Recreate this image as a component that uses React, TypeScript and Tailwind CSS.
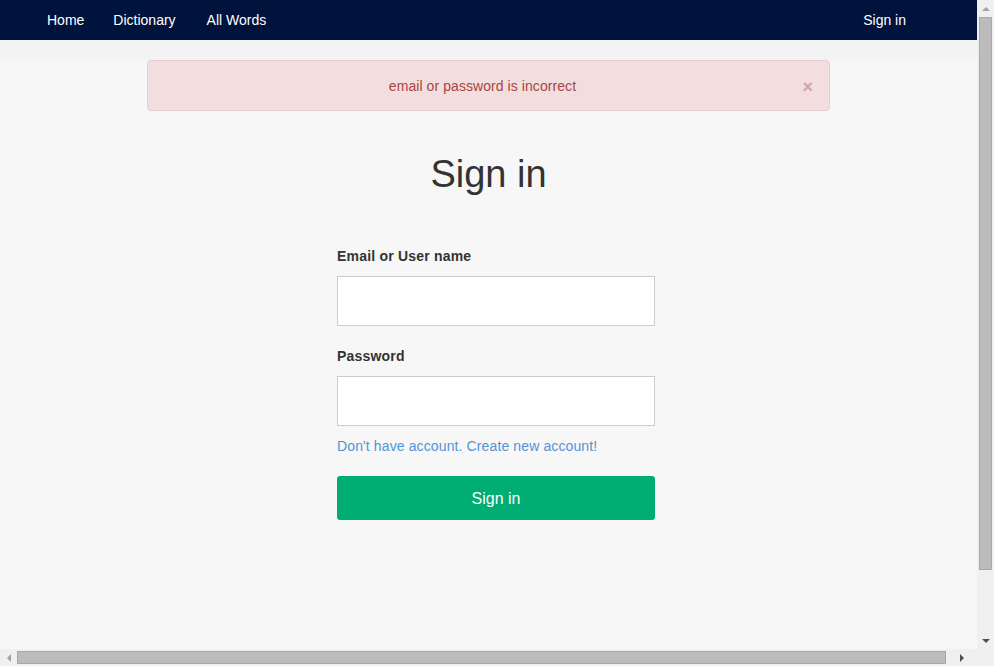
const font = { fontFamily: '"Liberation Sans", Arial, sans-serif' };

function NavBar() {
  return (
    <nav className="h-10 bg-[#00133d] flex items-center text-white text-[14px] px-[47px]">
      <a className="mr-[29px]">Home</a>
      <a className="mr-[31px]">Dictionary</a>
      <a>All Words</a>
      <a className="ml-auto mr-[24px]">Sign in</a>
    </nav>
  );
}

function Alert() {
  return (
    <div className="mx-auto w-[683px] h-[51px] pr-[12px] rounded-[4px] border border-[#ebccd1] bg-[#f2dede] text-[#a94442] text-[14px] tracking-[0.07px] flex items-center justify-center relative">
      <span className="mt-[2px]">email or password is incorrect</span>
      <span className="absolute right-[16px] top-[17px] text-[#c9a8a8] font-bold text-[18px] leading-none">×</span>
    </div>
  );
}

function SignInForm() {
  return (
    <div className="flex flex-col items-center">
      <h1 className="text-[38px] text-[#333] mt-[42px] leading-[42px]">Sign in</h1>
      <form className="w-[318px] mt-[51px] ml-[15px] flex flex-col">
        <label className="text-[14px] font-bold text-[#333] leading-5 tracking-[0.2px]">Email or User name</label>
        <input className="mt-[10px] h-[50px] bg-white border border-[#ccc] outline-none px-3" />
        <label className="text-[14px] font-bold text-[#333] leading-5 mt-[20px] tracking-[0.2px]">Password</label>
        <input type="password" className="mt-[10px] h-[50px] bg-white border border-[#ccc] outline-none px-3" />
        <a className="text-[14px] text-[#5294d6] mt-[10px] leading-5 tracking-[0.12px]">Don't have account. Create new account!</a>
        <button type="button" className="mt-[20px] h-[44px] rounded-[3px] bg-[#00ad73] text-white text-[16px]">
          <span className="relative top-[1px]">Sign in</span>
        </button>
      </form>
    </div>
  );
}

function VScrollbar() {
  return (
    <div className="w-[17px] bg-[#f0f0f0] flex flex-col items-center">
      <div className="h-[17px] flex items-center justify-center">
        <div className="w-0 h-0 border-x-[4px] border-x-transparent border-b-[4px] border-b-[#a3a3a3]" />
      </div>
      <div className="w-[13px] h-[553px] bg-[#bcbcbc] border border-[#a8a8a8]" />
      <div className="flex-1" />
      <div className="h-[17px] flex items-center justify-center">
        <div className="w-0 h-0 border-x-[4px] border-x-transparent border-t-[4px] border-t-[#505050]" />
      </div>
    </div>
  );
}

function HScrollbar() {
  return (
    <div className="h-[17px] bg-[#f0f0f0] flex items-center">
      <div className="w-[17px] flex items-center justify-center">
        <div className="w-0 h-0 border-y-[4px] border-y-transparent border-r-[4px] border-r-[#a3a3a3]" />
      </div>
      <div className="w-[929px] h-[13px] bg-[#bcbcbc] border border-[#a8a8a8]" />
      <div className="w-[31px] flex items-center justify-center">
        <div className="w-0 h-0 border-y-[4px] border-y-transparent border-l-[4px] border-l-[#505050]" />
      </div>
      <div className="w-[17px]" />
    </div>
  );
}

export default function App() {
  return (
    <div className="w-[994px] h-[666px] overflow-hidden flex flex-col" style={font}>
      <div className="flex flex-1 min-h-0">
        <div className="flex-1 bg-[#f7f7f7] flex flex-col">
          <NavBar />
          <div className="h-5 bg-[#f3f3f3]" />
          <Alert />
          <SignInForm />
        </div>
        <VScrollbar />
      </div>
      <HScrollbar />
    </div>
  );
}
